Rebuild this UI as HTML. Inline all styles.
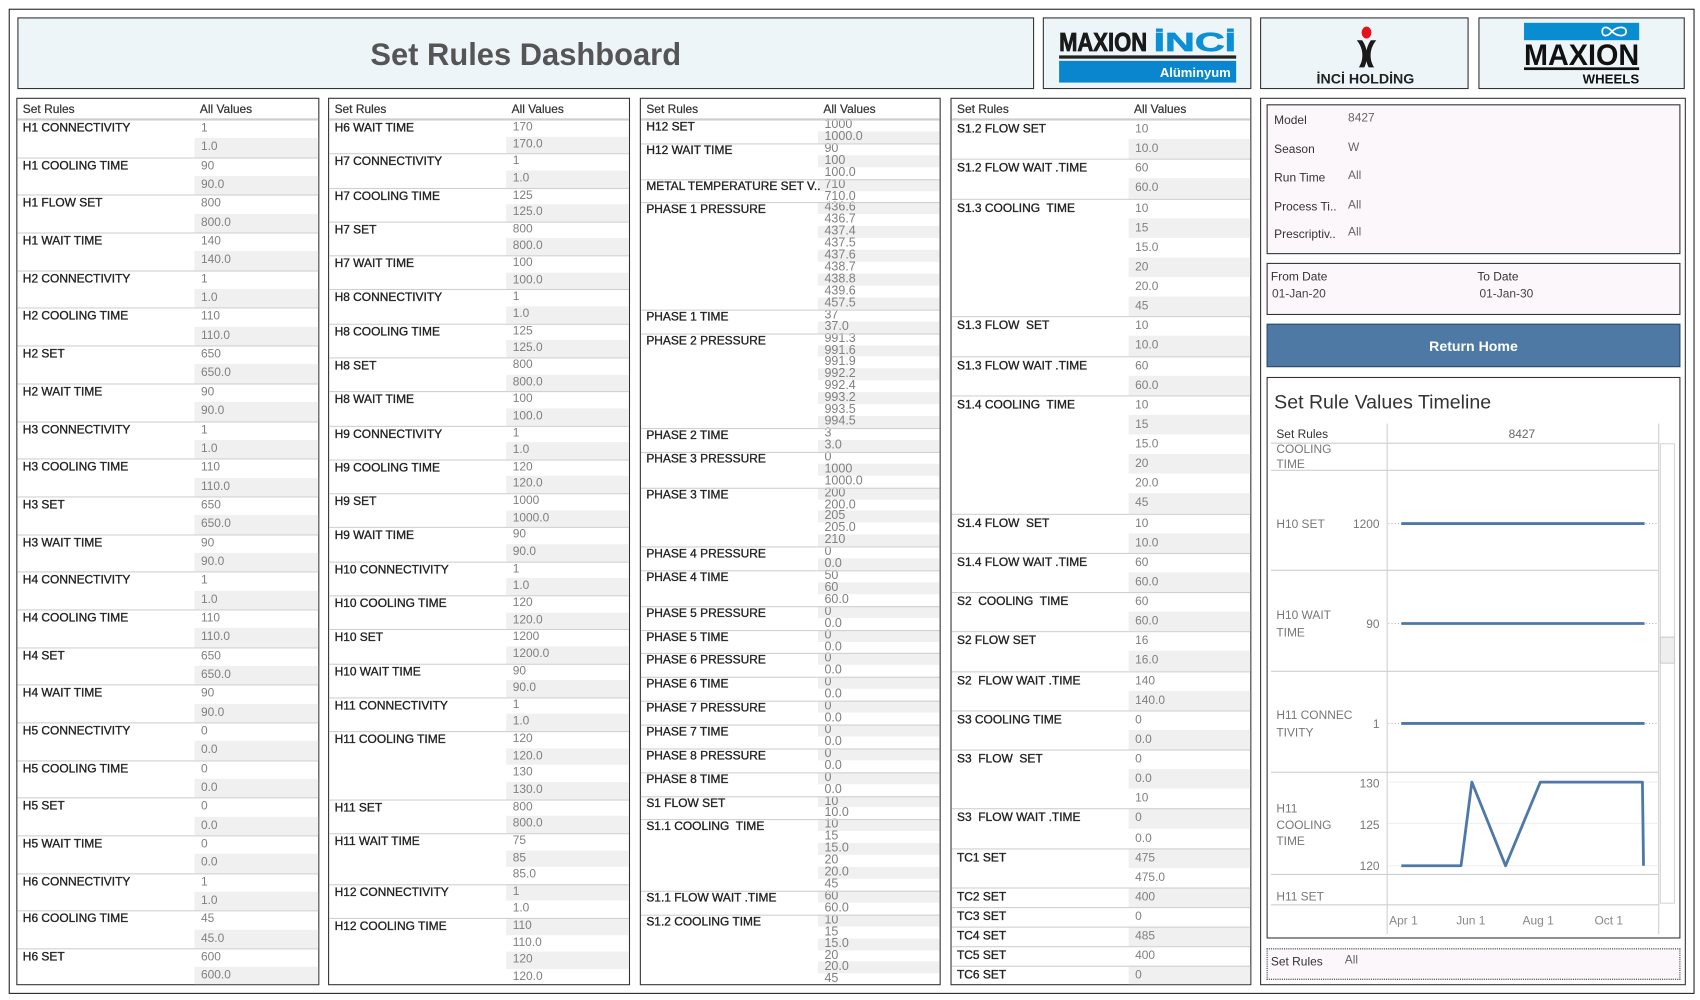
<!DOCTYPE html>
<html><head><meta charset="utf-8"><style>
*{margin:0;padding:0;box-sizing:border-box}
html,body{width:1700px;height:1000px;overflow:hidden;background:#fff;font-family:"Liberation Sans",sans-serif}
#w{position:absolute;left:0;top:0;width:1565px;height:921px;transform:scale(1.08626);transform-origin:0 0}
.b{position:absolute;border:1px solid #333}
.lg{background:#eef5f9}
.p{position:absolute;border:1px solid #333;background:#fff;overflow:hidden}
.hd{height:19px;border-bottom:1px solid #ccc;position:relative;font-size:11px;line-height:20px;color:#333;padding-left:5px;-webkit-text-stroke:0.2px #333}
.hd .a{position:absolute;left:168px;top:0}
.it{position:relative}
.it::after{content:"";position:absolute;left:0;right:0;top:0;height:1px;background:#d0d0d0;z-index:2}
.it:first-of-type::after{display:none}
.lb{position:absolute;left:5px;top:0;font-size:11px;color:#222;line-height:var(--lh);white-space:nowrap;z-index:3;-webkit-text-stroke:0.3px #222}
.vs{margin-left:163px}
.vs div{height:var(--h);line-height:var(--h);padding-left:6px;font-size:11px;color:#808080;white-space:nowrap;overflow:visible}
.vs .s{background:#f0f0f0}
.p3 .vs div{font-size:11.5px}
.f{position:absolute;font-size:11px;color:#333;white-space:nowrap}
.fv{color:#666}
</style></head><body><div id="w">
<div class="b" style="left:8px;top:8px;width:1552px;height:907px;border-color:#222"></div>
<div class="b lg" style="left:16px;top:16px;width:936px;height:66px"></div>
<div class="b lg" style="left:960px;top:16px;width:192px;height:66px"></div>
<div class="b lg" style="left:1160px;top:16px;width:192px;height:66px"></div>
<div class="b lg" style="left:1361px;top:16px;width:190px;height:66px"></div>

<!-- Panel 1 -->
<div class="p" style="left:15px;top:90px;width:279px;height:817px;--h:17.35px;--lh:17px">
<div class="hd">Set Rules<span class="a">All Values</span></div>
<div class="it"><div class="lb">H1 CONNECTIVITY</div><div class="vs"><div>1</div><div class="s">1.0</div></div></div>
<div class="it"><div class="lb">H1 COOLING TIME</div><div class="vs"><div>90</div><div class="s">90.0</div></div></div>
<div class="it"><div class="lb">H1 FLOW SET</div><div class="vs"><div>800</div><div class="s">800.0</div></div></div>
<div class="it"><div class="lb">H1 WAIT TIME</div><div class="vs"><div>140</div><div class="s">140.0</div></div></div>
<div class="it"><div class="lb">H2 CONNECTIVITY</div><div class="vs"><div>1</div><div class="s">1.0</div></div></div>
<div class="it"><div class="lb">H2 COOLING TIME</div><div class="vs"><div>110</div><div class="s">110.0</div></div></div>
<div class="it"><div class="lb">H2 SET</div><div class="vs"><div>650</div><div class="s">650.0</div></div></div>
<div class="it"><div class="lb">H2 WAIT TIME</div><div class="vs"><div>90</div><div class="s">90.0</div></div></div>
<div class="it"><div class="lb">H3 CONNECTIVITY</div><div class="vs"><div>1</div><div class="s">1.0</div></div></div>
<div class="it"><div class="lb">H3 COOLING TIME</div><div class="vs"><div>110</div><div class="s">110.0</div></div></div>
<div class="it"><div class="lb">H3 SET</div><div class="vs"><div>650</div><div class="s">650.0</div></div></div>
<div class="it"><div class="lb">H3 WAIT TIME</div><div class="vs"><div>90</div><div class="s">90.0</div></div></div>
<div class="it"><div class="lb">H4 CONNECTIVITY</div><div class="vs"><div>1</div><div class="s">1.0</div></div></div>
<div class="it"><div class="lb">H4 COOLING TIME</div><div class="vs"><div>110</div><div class="s">110.0</div></div></div>
<div class="it"><div class="lb">H4 SET</div><div class="vs"><div>650</div><div class="s">650.0</div></div></div>
<div class="it"><div class="lb">H4 WAIT TIME</div><div class="vs"><div>90</div><div class="s">90.0</div></div></div>
<div class="it"><div class="lb">H5 CONNECTIVITY</div><div class="vs"><div>0</div><div class="s">0.0</div></div></div>
<div class="it"><div class="lb">H5 COOLING TIME</div><div class="vs"><div>0</div><div class="s">0.0</div></div></div>
<div class="it"><div class="lb">H5 SET</div><div class="vs"><div>0</div><div class="s">0.0</div></div></div>
<div class="it"><div class="lb">H5 WAIT TIME</div><div class="vs"><div>0</div><div class="s">0.0</div></div></div>
<div class="it"><div class="lb">H6 CONNECTIVITY</div><div class="vs"><div>1</div><div class="s">1.0</div></div></div>
<div class="it"><div class="lb">H6 COOLING TIME</div><div class="vs"><div>45</div><div class="s">45.0</div></div></div>
<div class="it"><div class="lb">H6 SET</div><div class="vs"><div>600</div><div class="s">600.0</div></div></div>
</div>

<!-- Panel 2 -->
<div class="p" style="left:302px;top:90px;width:278px;height:817px;--h:15.65px;--lh:16px">
<div class="hd">Set Rules<span class="a">All Values</span></div>
<div class="it"><div class="lb">H6 WAIT TIME</div><div class="vs"><div>170</div><div class="s">170.0</div></div></div>
<div class="it"><div class="lb">H7 CONNECTIVITY</div><div class="vs"><div>1</div><div class="s">1.0</div></div></div>
<div class="it"><div class="lb">H7 COOLING TIME</div><div class="vs"><div>125</div><div class="s">125.0</div></div></div>
<div class="it"><div class="lb">H7 SET</div><div class="vs"><div>800</div><div class="s">800.0</div></div></div>
<div class="it"><div class="lb">H7 WAIT TIME</div><div class="vs"><div>100</div><div class="s">100.0</div></div></div>
<div class="it"><div class="lb">H8 CONNECTIVITY</div><div class="vs"><div>1</div><div class="s">1.0</div></div></div>
<div class="it"><div class="lb">H8 COOLING TIME</div><div class="vs"><div>125</div><div class="s">125.0</div></div></div>
<div class="it"><div class="lb">H8 SET</div><div class="vs"><div>800</div><div class="s">800.0</div></div></div>
<div class="it"><div class="lb">H8 WAIT TIME</div><div class="vs"><div>100</div><div class="s">100.0</div></div></div>
<div class="it"><div class="lb">H9 CONNECTIVITY</div><div class="vs"><div>1</div><div class="s">1.0</div></div></div>
<div class="it"><div class="lb">H9 COOLING TIME</div><div class="vs"><div>120</div><div class="s">120.0</div></div></div>
<div class="it"><div class="lb">H9 SET</div><div class="vs"><div>1000</div><div class="s">1000.0</div></div></div>
<div class="it"><div class="lb">H9 WAIT TIME</div><div class="vs"><div>90</div><div class="s">90.0</div></div></div>
<div class="it"><div class="lb">H10 CONNECTIVITY</div><div class="vs"><div>1</div><div class="s">1.0</div></div></div>
<div class="it"><div class="lb">H10 COOLING TIME</div><div class="vs"><div>120</div><div class="s">120.0</div></div></div>
<div class="it"><div class="lb">H10 SET</div><div class="vs"><div>1200</div><div class="s">1200.0</div></div></div>
<div class="it"><div class="lb">H10 WAIT TIME</div><div class="vs"><div>90</div><div class="s">90.0</div></div></div>
<div class="it"><div class="lb">H11 CONNECTIVITY</div><div class="vs"><div>1</div><div class="s">1.0</div></div></div>
<div class="it"><div class="lb">H11 COOLING TIME</div><div class="vs"><div>120</div><div class="s">120.0</div><div>130</div><div class="s">130.0</div></div></div>
<div class="it"><div class="lb">H11 SET</div><div class="vs"><div>800</div><div class="s">800.0</div></div></div>
<div class="it"><div class="lb">H11 WAIT TIME</div><div class="vs"><div>75</div><div class="s">85</div><div>85.0</div></div></div>
<div class="it"><div class="lb">H12 CONNECTIVITY</div><div class="vs"><div class="s">1</div><div>1.0</div></div></div>
<div class="it"><div class="lb">H12 COOLING TIME</div><div class="vs"><div class="s">110</div><div>110.0</div><div class="s">120</div><div>120.0</div></div></div>
</div>

<!-- Panel 3 -->
<div class="p p3" style="left:589px;top:90px;width:277px;height:817px;--h:10.93px;--lh:14px">
<div class="hd">Set Rules<span class="a">All Values</span></div>
<div class="it"><div class="lb">H12 SET</div><div class="vs"><div>1000</div><div class="s">1000.0</div></div></div>
<div class="it"><div class="lb">H12 WAIT TIME</div><div class="vs"><div>90</div><div class="s">100</div><div>100.0</div></div></div>
<div class="it"><div class="lb">METAL TEMPERATURE SET V..</div><div class="vs"><div class="s">710</div><div>710.0</div></div></div>
<div class="it"><div class="lb">PHASE 1 PRESSURE</div><div class="vs"><div class="s">436.6</div><div>436.7</div><div class="s">437.4</div><div>437.5</div><div class="s">437.6</div><div>438.7</div><div class="s">438.8</div><div>439.6</div><div class="s">457.5</div></div></div>
<div class="it"><div class="lb">PHASE 1 TIME</div><div class="vs"><div>37</div><div class="s">37.0</div></div></div>
<div class="it"><div class="lb">PHASE 2 PRESSURE</div><div class="vs"><div>991.3</div><div class="s">991.6</div><div>991.9</div><div class="s">992.2</div><div>992.4</div><div class="s">993.2</div><div>993.5</div><div class="s">994.5</div></div></div>
<div class="it"><div class="lb">PHASE 2 TIME</div><div class="vs"><div>3</div><div class="s">3.0</div></div></div>
<div class="it"><div class="lb">PHASE 3 PRESSURE</div><div class="vs"><div>0</div><div class="s">1000</div><div>1000.0</div></div></div>
<div class="it"><div class="lb">PHASE 3 TIME</div><div class="vs"><div class="s">200</div><div>200.0</div><div class="s">205</div><div>205.0</div><div class="s">210</div></div></div>
<div class="it"><div class="lb">PHASE 4 PRESSURE</div><div class="vs"><div>0</div><div class="s">0.0</div></div></div>
<div class="it"><div class="lb">PHASE 4 TIME</div><div class="vs"><div>50</div><div class="s">60</div><div>60.0</div></div></div>
<div class="it"><div class="lb">PHASE 5 PRESSURE</div><div class="vs"><div class="s">0</div><div>0.0</div></div></div>
<div class="it"><div class="lb">PHASE 5 TIME</div><div class="vs"><div class="s">0</div><div>0.0</div></div></div>
<div class="it"><div class="lb">PHASE 6 PRESSURE</div><div class="vs"><div class="s">0</div><div>0.0</div></div></div>
<div class="it"><div class="lb">PHASE 6 TIME</div><div class="vs"><div class="s">0</div><div>0.0</div></div></div>
<div class="it"><div class="lb">PHASE 7 PRESSURE</div><div class="vs"><div class="s">0</div><div>0.0</div></div></div>
<div class="it"><div class="lb">PHASE 7 TIME</div><div class="vs"><div class="s">0</div><div>0.0</div></div></div>
<div class="it"><div class="lb">PHASE 8 PRESSURE</div><div class="vs"><div class="s">0</div><div>0.0</div></div></div>
<div class="it"><div class="lb">PHASE 8 TIME</div><div class="vs"><div class="s">0</div><div>0.0</div></div></div>
<div class="it"><div class="lb">S1 FLOW SET</div><div class="vs"><div class="s">10</div><div>10.0</div></div></div>
<div class="it"><div class="lb">S1.1 COOLING&nbsp; TIME</div><div class="vs"><div class="s">10</div><div>15</div><div class="s">15.0</div><div>20</div><div class="s">20.0</div><div>45</div></div></div>
<div class="it"><div class="lb">S1.1 FLOW WAIT .TIME</div><div class="vs"><div class="s">60</div><div>60.0</div></div></div>
<div class="it"><div class="lb">S1.2 COOLING TIME</div><div class="vs"><div class="s">10</div><div>15</div><div class="s">15.0</div><div>20</div><div class="s">20.0</div><div>45</div></div></div>
</div>

<!-- Panel 4 -->
<div class="p" style="left:875px;top:90px;width:277px;height:817px;--h:18.14px;--lh:18px">
<div class="hd">Set Rules<span class="a">All Values</span></div>
<div class="it"><div class="lb">S1.2 FLOW SET</div><div class="vs"><div>10</div><div class="s">10.0</div></div></div>
<div class="it"><div class="lb">S1.2 FLOW WAIT .TIME</div><div class="vs"><div>60</div><div class="s">60.0</div></div></div>
<div class="it"><div class="lb">S1.3 COOLING&nbsp; TIME</div><div class="vs"><div>10</div><div class="s">15</div><div>15.0</div><div class="s">20</div><div>20.0</div><div class="s">45</div></div></div>
<div class="it"><div class="lb">S1.3 FLOW&nbsp; SET</div><div class="vs"><div>10</div><div class="s">10.0</div></div></div>
<div class="it"><div class="lb">S1.3 FLOW WAIT .TIME</div><div class="vs"><div>60</div><div class="s">60.0</div></div></div>
<div class="it"><div class="lb">S1.4 COOLING&nbsp; TIME</div><div class="vs"><div>10</div><div class="s">15</div><div>15.0</div><div class="s">20</div><div>20.0</div><div class="s">45</div></div></div>
<div class="it"><div class="lb">S1.4 FLOW&nbsp; SET</div><div class="vs"><div>10</div><div class="s">10.0</div></div></div>
<div class="it"><div class="lb">S1.4 FLOW WAIT .TIME</div><div class="vs"><div>60</div><div class="s">60.0</div></div></div>
<div class="it"><div class="lb">S2&nbsp; COOLING&nbsp; TIME</div><div class="vs"><div>60</div><div class="s">60.0</div></div></div>
<div class="it"><div class="lb">S2 FLOW SET</div><div class="vs"><div>16</div><div class="s">16.0</div></div></div>
<div class="it"><div class="lb">S2&nbsp; FLOW WAIT .TIME</div><div class="vs"><div>140</div><div class="s">140.0</div></div></div>
<div class="it"><div class="lb">S3 COOLING TIME</div><div class="vs"><div>0</div><div class="s">0.0</div></div></div>
<div class="it"><div class="lb">S3&nbsp; FLOW&nbsp; SET</div><div class="vs"><div>0</div><div class="s">0.0</div><div>10</div></div></div>
<div class="it"><div class="lb">S3&nbsp; FLOW WAIT .TIME</div><div class="vs"><div class="s">0</div><div>0.0</div></div></div>
<div class="it"><div class="lb">TC1 SET</div><div class="vs"><div class="s">475</div><div>475.0</div></div></div>
<div class="it"><div class="lb">TC2 SET</div><div class="vs"><div class="s">400</div></div></div>
<div class="it"><div class="lb">TC3 SET</div><div class="vs"><div>0</div></div></div>
<div class="it"><div class="lb">TC4 SET</div><div class="vs"><div class="s">485</div></div></div>
<div class="it"><div class="lb">TC5 SET</div><div class="vs"><div>400</div></div></div>
<div class="it"><div class="lb">TC6 SET</div><div class="vs"><div class="s">0</div></div></div>
</div>

<!-- Right panel -->
<div class="b" style="left:1160px;top:90px;width:392px;height:817px"></div>
<div class="b" style="left:1166px;top:96px;width:381px;height:138px;background:#fbf7fa"></div>
<div class="f" style="left:1173px;top:105px">Model</div><div class="f fv" style="left:1241px;top:103px">8427</div>
<div class="f" style="left:1173px;top:132px">Season</div><div class="f fv" style="left:1241px;top:130px">W</div>
<div class="f" style="left:1173px;top:158px">Run Time</div><div class="f fv" style="left:1241px;top:156px">All</div>
<div class="f" style="left:1173px;top:185px">Process Ti..</div><div class="f fv" style="left:1241px;top:183px">All</div>
<div class="f" style="left:1173px;top:210px">Prescriptiv..</div><div class="f fv" style="left:1241px;top:208px">All</div>
<div class="b" style="left:1166px;top:242px;width:381px;height:48px;background:#fbf7fa"></div>
<div class="f" style="left:1170px;top:249px">From Date</div><div class="f" style="left:1171px;top:265px;color:#444">01-Jan-20</div>
<div class="f" style="left:1360px;top:249px">To Date</div><div class="f" style="left:1362px;top:265px;color:#444">01-Jan-30</div>
<div class="b" style="left:1166px;top:298px;width:381px;height:40px;background:#4e79a5;border-color:#2d4a6a;color:#fff;font-weight:bold;font-size:13px;text-align:center;line-height:40px">Return Home</div>
<div class="b" style="left:1166px;top:347px;width:381px;height:517px;background:#fff"></div>
<div class="b" style="left:1166px;top:873px;width:381px;height:29px;background:#fbf7fa;border:1px dotted #333"></div>
<div class="f" style="left:1170px;top:880px">Set Rules</div><div class="f fv" style="left:1238px;top:878px">All</div>

<svg style="position:absolute;left:0;top:0" width="1565" height="921" viewBox="0 0 1565 921" font-family="Liberation Sans, sans-serif">
<text x="484" y="60" text-anchor="middle" font-size="29" font-weight="bold" fill="#555" textLength="286" lengthAdjust="spacingAndGlyphs">Set Rules Dashboard</text>
<!-- logo1 -->
<text x="975" y="47" font-size="24" font-weight="bold" fill="#1a1a1a" stroke="#1a1a1a" stroke-width="0.8" textLength="81" lengthAdjust="spacingAndGlyphs">MAXION</text>
<text x="1062" y="47" font-size="24" font-weight="bold" fill="#0b8fd6" stroke="#0b8fd6" stroke-width="0.6" textLength="76" lengthAdjust="spacingAndGlyphs">İNCİ</text>
<rect x="975" y="51" width="163" height="3" fill="#222"/>
<rect x="975" y="56" width="163" height="20" fill="#0a86cf"/>
<text x="1133" y="71" text-anchor="end" font-size="12" font-weight="bold" fill="#fff">Alüminyum</text>
<!-- logo2 -->
<ellipse cx="1258" cy="30" rx="4.5" ry="5.5" fill="#e5121b"/>
<path d="M1249,37 C1255,44 1256,54 1251,62 L1256,62 C1260,54 1259,44 1254,37 Z" fill="#1a1a1a"/>
<path d="M1267,37 C1261,44 1260,54 1265,62 L1260,62 C1256,54 1257,44 1262,37 Z" fill="#1a1a1a"/>
<text x="1257" y="77" text-anchor="middle" font-size="13" font-weight="bold" fill="#222" textLength="90" lengthAdjust="spacingAndGlyphs">İNCİ HOLDİNG</text>
<!-- logo3 -->
<rect x="1403" y="21" width="106" height="16" fill="#0a8dd0"/>
<path d="M1484,29 C1480,24 1475,24 1475,29 C1475,34 1480,34 1484,29 C1489,24 1497,24 1497,29 C1497,34 1489,34 1484,29 Z" fill="none" stroke="#fff" stroke-width="1.6"/>
<text x="1403" y="60" font-size="27" font-weight="bold" fill="#111" textLength="106" lengthAdjust="spacingAndGlyphs">MAXION</text>
<rect x="1403" y="62" width="106" height="2.5" fill="#111"/>
<text x="1509" y="77" text-anchor="end" font-size="12" font-weight="bold" fill="#111" textLength="52" lengthAdjust="spacingAndGlyphs">WHEELS</text>
<!-- chart -->
<text x="1173" y="376" font-size="18" fill="#333">Set Rule Values Timeline</text>
<text x="1175" y="403" font-size="11" fill="#333">Set Rules</text>
<text x="1401" y="403" font-size="11" fill="#666" text-anchor="middle">8427</text>
<g stroke="#cfcfcf" stroke-width="1">
<line x1="1277" y1="390" x2="1277" y2="860"/><line x1="1527" y1="390" x2="1527" y2="860"/>
<line x1="1170" y1="408" x2="1527" y2="408"/>
<line x1="1170" y1="433" x2="1527" y2="433"/>
<line x1="1170" y1="525" x2="1527" y2="525"/>
<line x1="1170" y1="618" x2="1527" y2="618"/>
<line x1="1170" y1="711" x2="1527" y2="711"/>
<line x1="1170" y1="805" x2="1527" y2="805"/>
<line x1="1170" y1="833" x2="1527" y2="833"/>
</g>
<g stroke="#eee"><line x1="1278" y1="720" x2="1527" y2="720"/><line x1="1278" y1="758" x2="1527" y2="758"/><line x1="1278" y1="797" x2="1527" y2="797"/></g>
<g stroke="#bbb" stroke-dasharray="1,2"><line x1="1278" y1="482" x2="1527" y2="482"/><line x1="1278" y1="574" x2="1527" y2="574"/><line x1="1278" y1="666" x2="1527" y2="666"/></g>
<svg x="1170" y="409" width="100" height="24"><text x="5" y="8" font-size="11" fill="#777">COOLING</text></svg>
<g font-size="11" fill="#777">
<text x="1175" y="431">TIME</text>
<text x="1175" y="486">H10 SET</text>
<text x="1175" y="570">H10 WAIT</text><text x="1175" y="586">TIME</text>
<text x="1175" y="662">H11 CONNEC</text><text x="1175" y="678">TIVITY</text>
<text x="1175" y="748">H11</text><text x="1175" y="763">COOLING</text><text x="1175" y="778">TIME</text>
<text x="1175" y="829">H11 SET</text>
</g>
<g font-size="11" fill="#777" text-anchor="end">
<text x="1270" y="486">1200</text><text x="1270" y="578">90</text><text x="1270" y="670">1</text>
<text x="1270" y="725">130</text><text x="1270" y="763">125</text><text x="1270" y="801">120</text>
</g>
<g stroke="#4e79a7" stroke-width="2.6" fill="none" stroke-linejoin="round">
<line x1="1290" y1="482" x2="1514" y2="482"/>
<line x1="1290" y1="574" x2="1514" y2="574"/>
<line x1="1290" y1="666" x2="1514" y2="666"/>
<polyline points="1290,797 1345,797 1355,720 1386,797 1418,720 1512,720 1513,797"/>
</g>
<g font-size="11" fill="#888" text-anchor="middle">
<text x="1292" y="851">Apr 1</text><text x="1354" y="851">Jun 1</text><text x="1416" y="851">Aug 1</text><text x="1481" y="851">Oct 1</text>
</g>
<rect x="1528.5" y="408.5" width="13" height="423" fill="#fff" stroke="#d6d6d6"/>
<rect x="1528.5" y="586.5" width="13" height="24" fill="#eee" stroke="#ccc"/>
</svg>
</div></body></html>
